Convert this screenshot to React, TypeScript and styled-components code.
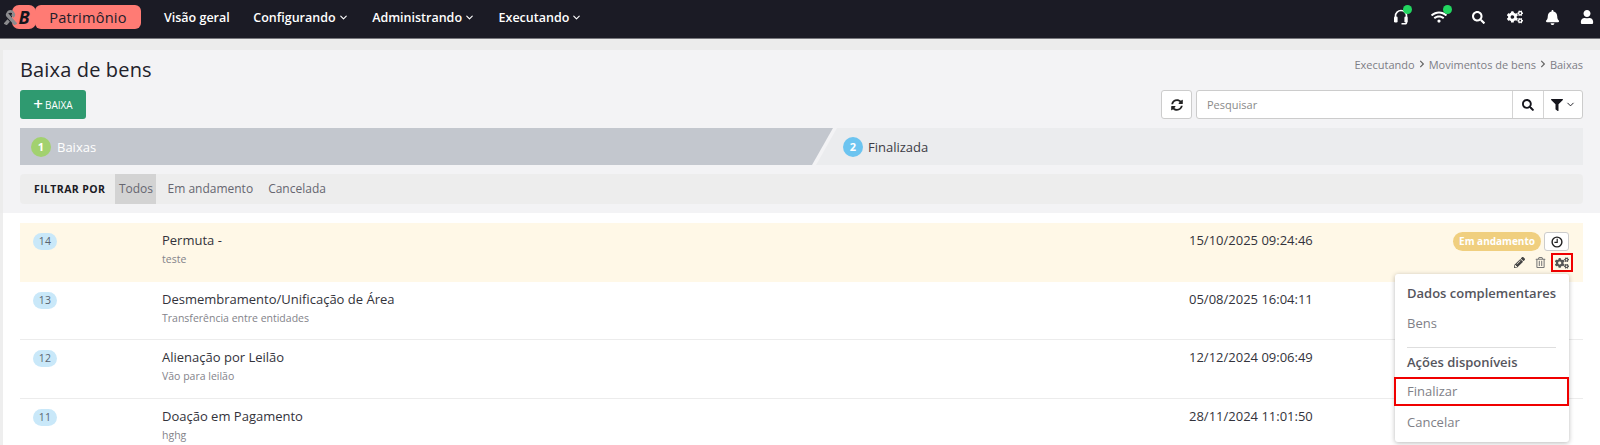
import React from "react";
import styled, { createGlobalStyle } from "styled-components";
import {
  FaBell, FaCogs, FaFilter, FaPencilAlt, FaRegTrashAlt, FaRibbon, FaSearch, FaSyncAlt, FaUser, FaWifi, FaChevronRight,
} from "react-icons/fa";
import { ChevronDown } from "lucide-react";

const Global = createGlobalStyle`
  html, body { margin: 0; padding: 0; height: 445px; overflow: hidden; background: #fff; }
  body { font-family: "Open Sans", "Liberation Sans", sans-serif; color: #333; }
  * { box-sizing: border-box; }
`;

const Page = styled.div`
  position: relative;
  width: 1600px;
  height: 445px;
  overflow: hidden;
  background: #fff;
`;

const Navbar = styled.header`
  height: 39px;
  background: #1b1b25;
  border-bottom: 1px solid #77777c;
  display: flex;
  align-items: center;
  padding: 0 4px 4px 3px;
`;

const Logo = styled.div`
  display: flex;
  align-items: center;
  flex: none;
  margin-right: 23px;
`;

const RibbonMark = styled.span`
  display: flex;
  color: #8b8b8e;
  font-size: 15px;
  margin-right: -6px;
  position: relative;
  z-index: 1;
`;

const LogoLetter = styled.span`
  width: 24px;
  height: 24px;
  border-radius: 7px;
  background: #ff7b74;
  color: #15151c;
  font: italic 700 18px/24px "Open Sans", sans-serif;
  text-align: center;
`;

const LogoName = styled.span`
  width: 106px;
  height: 24px;
  margin-left: -1px;
  border-radius: 6px;
  background: #ff7b74;
  color: #23202a;
  font-size: 14.6px;
  line-height: 24px;
  text-align: center;
  letter-spacing: 0.2px;
`;

const NavLink = styled.a`
  display: flex;
  align-items: center;
  gap: 2px;
  color: #fff;
  font-size: 12.5px;
  font-weight: 600;
  margin-right: 23.5px;
  white-space: nowrap;
`;

const NavSpacer = styled.div`
  flex: 1;
`;

const NavIcon = styled.span`
  position: relative;
  display: flex;
  justify-content: center;
  width: 18px;
  color: #fff;
  font-size: ${(p) => p.$size ?? 14}px;
  margin-left: ${(p) => p.$gap ?? 22}px;
`;

const Dot = styled.i`
  position: absolute;
  right: ${(p) => p.$right}px;
  top: -4px;
  width: 9px;
  height: 9px;
  border-radius: 50%;
  background: #22d660;
`;

const Top = styled.div`
  background: #ececec;
  padding: 11px 0 0 3px;
`;

const Panel = styled.section`
  height: 163px;
  background: #f3f3f5;
  padding: 0 17px;
`;

const TitleRow = styled.div`
  display: flex;
  justify-content: space-between;
  height: 40px;
`;

const Title = styled.h1`
  margin: 5px 0 0;
  font-size: 20px;
  line-height: 29px;
  font-weight: 400;
  letter-spacing: 0.15px;
  color: #22222a;
`;

const Crumbs = styled.nav`
  display: flex;
  align-items: center;
  gap: 3px;
  height: 14px;
  margin-top: 7px;
  font-size: 11px;
  color: #7d7d85;
  svg { font-size: 8px; color: #666; }
`;

const ActionRow = styled.div`
  display: flex;
  align-items: center;
  height: 29px;
`;

const AddButton = styled.button`
  display: flex;
  align-items: center;
  justify-content: center;
  gap: 2px;
  width: 66px;
  height: 29px;
  border: 0;
  border-radius: 3px;
  background: #2f9a70;
  color: #fff;
  font-family: inherit;
  font-size: 10px;
  padding: 0;
  b { font-size: 17px; font-weight: 600; line-height: 15px; margin-top: -2px; }
`;

const Refresh = styled.button`
  margin-left: auto;
  width: 31px;
  height: 29px;
  background: #fff;
  border: 1px solid #ccc;
  border-radius: 3px;
  display: flex;
  align-items: center;
  justify-content: center;
  color: #222;
  font-size: 12px;
  padding: 0;
`;

const SearchGroup = styled.div`
  display: flex;
  width: 387px;
  height: 29px;
  margin-left: 4px;
  background: #fff;
  border: 1px solid #ccc;
  border-radius: 3px;
`;

const SearchInput = styled.div`
  flex: 1;
  padding-left: 10px;
  font-size: 11px;
  line-height: 27px;
  color: #8a8a8a;
`;

const GroupButton = styled.span`
  display: flex;
  align-items: center;
  justify-content: center;
  gap: 2px;
  width: ${(p) => p.$width}px;
  border-left: 1px solid #d4d4d4;
  color: #15151c;
  font-size: 12px;
`;

const Steps = styled.div`
  display: flex;
  height: 37px;
  margin-top: 9px;
`;

const Step = styled.div`
  display: flex;
  align-items: center;
  font-size: 13px;
  color: ${(p) => (p.$active ? "#fff" : "#3b3b45")};
  ${(p) =>
    p.$active
      ? `width: 813px; gap: 6px; padding-left: 11px; background: #c3c7ce; clip-path: polygon(0 0, 100% 0, calc(100% - 21px) 100%, 0 100%);`
      : `flex: 1; gap: 5px; margin-left: -17px; padding-left: 27px; background: #ebecee; clip-path: polygon(21px 0, 100% 0, 100% 100%, 0 100%);`}
`;

const StepNum = styled.span`
  width: 20px;
  height: 20px;
  border-radius: 50%;
  background: ${(p) => p.$color};
  color: #fff;
  font-size: 11px;
  font-weight: 700;
  line-height: 20px;
  text-align: center;
`;

const FilterBar = styled.div`
  display: flex;
  align-items: center;
  height: 30px;
  margin-top: 9px;
  padding-left: 14px;
  background: #ededed;
  border-radius: 4px;
`;

const FilterLabel = styled.span`
  font-size: 10.5px;
  font-weight: 700;
  letter-spacing: 0.4px;
  color: #1b1b25;
  margin-right: 10px;
`;

const FilterItem = styled.span`
  height: 30px;
  padding: 0 ${(p) => (p.$active ? 3.5 : 0)}px;
  margin-right: ${(p) => (p.$active ? 11 : 15)}px;
  line-height: 30px;
  font-size: 12px;
  color: #666670;
  background: ${(p) => (p.$active ? "#d3d3d3" : "transparent")};
`;

const List = styled.div`
  position: relative;
  height: 232px;
  padding: 10px 17px 0;
  border-left: 3px solid #eeeeee;
`;

const Row = styled.article`
  display: grid;
  grid-template-columns: 129px 1027px 1fr;
  height: 58.5px;
  padding-left: 13px;
  background: ${(p) => (p.$highlight ? "#fff8e7" : "#fff")};
  border-bottom: ${(p) => (p.$highlight ? "0" : "1px solid #ececec")};
`;

const Badge = styled.span`
  align-self: start;
  width: 24px;
  height: 17px;
  margin-top: 10px;
  border-radius: 9px;
  background: #c9e8f9;
  color: #5b6470;
  font-size: 10.5px;
  line-height: 17px;
  text-align: center;
  letter-spacing: 0.3px;
`;

const RowText = styled.div`
  padding-top: 8px;
`;

const RowTitle = styled.div`
  font-size: 13px;
  line-height: 18px;
  color: #33333b;
`;

const RowSub = styled.div`
  margin-top: 3px;
  font-size: 10.5px;
  line-height: 15px;
  color: #83838a;
`;

const RowDate = styled.div`
  padding-top: 8px;
  font-size: 13px;
  line-height: 18px;
  color: #33333b;
`;

const RowActions = styled.div`
  position: absolute;
  right: 31px;
  top: 19px;
  display: flex;
  flex-direction: column;
  align-items: flex-end;
  gap: 2px;
`;

const ActionTop = styled.div`
  display: flex;
  align-items: center;
  gap: 3px;
`;

const StatusPill = styled.span`
  height: 19px;
  width: 88px;
  border-radius: 10px;
  background: #f0cf7f;
  color: #fff;
  font-size: 10px;
  font-weight: 700;
  line-height: 19px;
  text-align: center;
`;

const ClockButton = styled.span`
  display: flex;
  align-items: center;
  justify-content: center;
  width: 25px;
  height: 19px;
  background: #fff;
  border: 1px solid #ccc;
  border-radius: 3px;
`;

const ActionIcons = styled.div`
  display: flex;
  align-items: center;
  gap: 10px;
  height: 19px;
  margin-right: -4px;
  color: #444;
  font-size: 11px;
`;

const TrashIcon = styled.span`
  display: flex;
  color: #777;
  margin-right: -5px;
`;

const GearOutline = styled.span`
  display: flex;
  align-items: center;
  justify-content: center;
  width: 22px;
  height: 19px;
  border: 2px solid #f00000;
  color: #555;
  font-size: 14px;
`;

const Menu = styled.div`
  position: absolute;
  left: 1395px;
  top: 274px;
  width: 174px;
  height: 168px;
  padding-top: 9px;
  background: #fff;
  border-radius: 3px;
  box-shadow: 0 1px 5px rgba(0, 0, 0, 0.28);
`;

const MenuHeading = styled.div`
  padding: 0 12px;
  height: 20px;
  margin-bottom: 5px;
  font-size: 13px;
  font-weight: 600;
  line-height: 20px;
  color: #55555d;
  white-space: nowrap;
`;

const MenuItem = styled.div`
  height: 30px;
  padding-left: 12px;
  font-size: 13px;
  line-height: 30px;
  color: #808087;
`;

const OutlinedItem = styled(MenuItem)`
  height: 29px;
  margin: 0 0 1px -1px;
  border: 2px solid #f00000;
  padding-left: 11px;
  line-height: 25px;
`;

const MenuRule = styled.hr`
  height: 1px;
  margin: 9px 13px 4px 12px;
  border: 0;
  background: #dedede;
`;

const HeadsetIcon = () => (
  <svg width="16" height="16" viewBox="0 0 16 16" fill="none">
    <path d="M2.5 9V7a5.5 5.5 0 0 1 11 0v6.5a1.2 1.2 0 0 1-1.2 1.2H8.5" stroke="#fff" strokeWidth="1.6" />
    <rect x="1" y="7.5" width="3.6" height="6" rx="1.2" fill="#fff" />
    <rect x="11.4" y="7.5" width="3.2" height="6" rx="1.2" fill="#fff" />
  </svg>
);

const ClockIcon = () => (
  <svg width="12" height="12" viewBox="0 0 12 12" fill="none" stroke="#222" strokeWidth="1.4">
    <circle cx="6" cy="6" r="4.9" />
    <path d="M6.2 2.8v3.5H3.4" strokeWidth="1.2" />
  </svg>
);

const rows = [
  { n: 14, t: "Permuta -", s: "teste", d: "15/10/2025 09:24:46", hl: true },
  { n: 13, t: "Desmembramento/Unificação de Área", s: "Transferência entre entidades", d: "05/08/2025 16:04:11" },
  { n: 12, t: "Alienação por Leilão", s: "Vão para leilão", d: "12/12/2024 09:06:49" },
  { n: 11, t: "Doação em Pagamento", s: "hghg", d: "28/11/2024 11:01:50" },
];

export default function App() {
  return (
    <Page>
      <Global />
      <Navbar>
        <Logo>
          <RibbonMark><FaRibbon /></RibbonMark>
          <LogoLetter>B</LogoLetter>
          <LogoName>Patrimônio</LogoName>
        </Logo>
        <NavLink>Visão geral</NavLink>
        <NavLink>Configurando <ChevronDown size={11} strokeWidth={2.5} /></NavLink>
        <NavLink>Administrando <ChevronDown size={11} strokeWidth={2.5} /></NavLink>
        <NavLink>Executando <ChevronDown size={11} strokeWidth={2.5} /></NavLink>
        <NavSpacer />
        <NavIcon><HeadsetIcon /><Dot $right={-2} /></NavIcon>
        <NavIcon $size={16} $gap={20}><FaWifi /><Dot $right={-4} /></NavIcon>
        <NavIcon $size={13} $gap={21}><FaSearch /></NavIcon>
        <NavIcon $size={16} $gap={19}><FaCogs /></NavIcon>
        <NavIcon $size={15} $gap={19}><FaBell /></NavIcon>
        <NavIcon $size={14} $gap={17}><FaUser /></NavIcon>
      </Navbar>
      <Top>
        <Panel>
          <TitleRow>
            <Title>Baixa de bens</Title>
            <Crumbs>
              Executando <FaChevronRight /> Movimentos de bens <FaChevronRight /> Baixas
            </Crumbs>
          </TitleRow>
          <ActionRow>
            <AddButton><b>+</b>BAIXA</AddButton>
            <Refresh><FaSyncAlt /></Refresh>
            <SearchGroup>
              <SearchInput>Pesquisar</SearchInput>
              <GroupButton $width={31}><FaSearch /></GroupButton>
              <GroupButton $width={39}><FaFilter /><ChevronDown size={11} strokeWidth={2} /></GroupButton>
            </SearchGroup>
          </ActionRow>
          <Steps>
            <Step $active><StepNum $color="#a2d16f">1</StepNum>Baixas</Step>
            <Step><StepNum $color="#6cc4f0">2</StepNum>Finalizada</Step>
          </Steps>
          <FilterBar>
            <FilterLabel>FILTRAR POR</FilterLabel>
            <FilterItem $active>Todos</FilterItem>
            <FilterItem>Em andamento</FilterItem>
            <FilterItem>Cancelada</FilterItem>
          </FilterBar>
        </Panel>
      </Top>
      <List>
        {rows.map((r) => (
          <Row key={r.n} $highlight={r.hl}>
            <Badge>{r.n}</Badge>
            <RowText>
              <RowTitle>{r.t}</RowTitle>
              <RowSub>{r.s}</RowSub>
            </RowText>
            <RowDate>{r.d}</RowDate>
          </Row>
        ))}
        <RowActions>
          <ActionTop>
            <StatusPill>Em andamento</StatusPill>
            <ClockButton><ClockIcon /></ClockButton>
          </ActionTop>
          <ActionIcons>
            <FaPencilAlt />
            <TrashIcon><FaRegTrashAlt /></TrashIcon>
            <GearOutline><FaCogs /></GearOutline>
          </ActionIcons>
        </RowActions>
      </List>
      <Menu>
        <MenuHeading>Dados complementares</MenuHeading>
        <MenuItem>Bens</MenuItem>
        <MenuRule />
        <MenuHeading>Ações disponíveis</MenuHeading>
        <OutlinedItem>Finalizar</OutlinedItem>
        <MenuItem>Cancelar</MenuItem>
      </Menu>
    </Page>
  );
}
